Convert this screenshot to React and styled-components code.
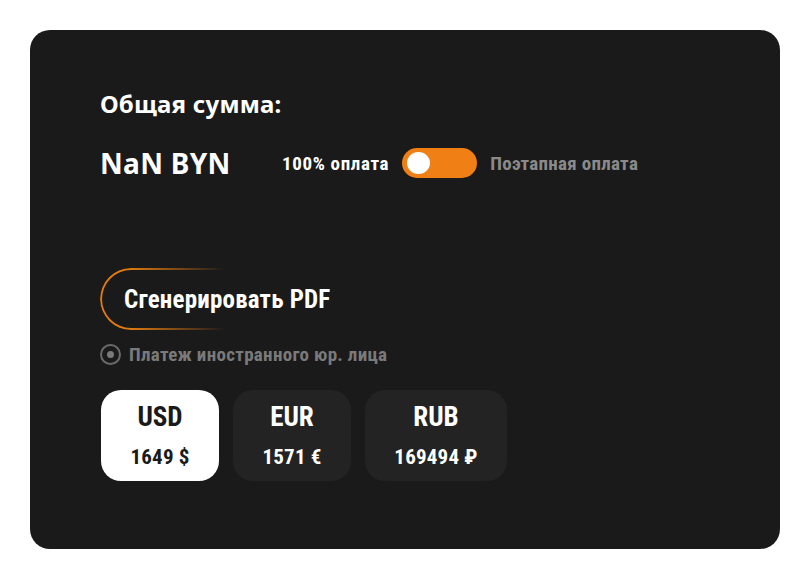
import React, { useState } from 'react';
import styled, { createGlobalStyle } from 'styled-components';

const GlobalStyle = createGlobalStyle`
    html, body {
        margin: 0;
        padding: 0;
        background: #ffffff;
    }
    * {
        box-sizing: border-box;
    }
`;

const narrow = `"Liberation Sans Narrow", "Roboto Condensed", "Liberation Sans", sans-serif`;

const currencies = [
    { code: 'USD', value: '1649 $', width: 118 },
    { code: 'EUR', value: '1571 €', width: 118 },
    { code: 'RUB', value: '169494 ₽', width: 142 },
];

function App() {
    const [stage, setStage] = useState(false);
    const [active, setActive] = useState('USD');

    return (
        <Page>
            <GlobalStyle />
            <Card>
                <Title>Общая сумма:</Title>
                <SumRow>
                    <Sum>NaN BYN</Sum>
                    <PayLabel $on={!stage}>100% оплата</PayLabel>
                    <Toggle $on={stage} onClick={() => setStage(!stage)}>
                        <Knob $on={stage} />
                    </Toggle>
                    <PayLabel $on={stage}>Поэтапная оплата</PayLabel>
                </SumRow>

                <PdfButton>Сгенерировать PDF</PdfButton>

                <RadioRow>
                    <Radio />
                    <RadioText>Платеж иностранного юр. лица</RadioText>
                </RadioRow>

                <CurrencyList>
                    {currencies.map((c) => (
                        <CurrencyCard
                            key={c.code}
                            $active={active === c.code}
                            $width={c.width}
                            onClick={() => setActive(c.code)}
                        >
                            <CurrencyCode>{c.code}</CurrencyCode>
                            <CurrencyValue>{c.value}</CurrencyValue>
                        </CurrencyCard>
                    ))}
                </CurrencyList>
            </Card>
        </Page>
    );
}

export default App;

const Page = styled.div`
    padding: 30px;
    width: 810px;
`;

const Card = styled.div`
    width: 750px;
    height: 519px;
    background: #1a1a1a;
    border-radius: 20px;
    padding: 59px 70px 0 70px;
    display: flex;
    flex-direction: column;
`;

const Title = styled.div`
    font-family: "Noto Sans", "Open Sans", sans-serif;
    font-weight: 700;
    font-size: 24px;
    line-height: 30px;
    letter-spacing: 0.2px;
    color: #ffffff;
`;

const SumRow = styled.div`
    display: flex;
    align-items: center;
    margin-top: 29px;
    height: 30px;
`;

const Sum = styled.div`
    font-family: "Noto Sans", "Open Sans", sans-serif;
    font-weight: 700;
    font-size: 28px;
    color: #ffffff;
    width: 182px;
    letter-spacing: 0.3px;
`;

const PayLabel = styled.span`
    font-family: ${narrow};
    font-weight: 700;
    font-size: 19px;
    letter-spacing: ${(p) => (p.$on ? '0.65px' : '0.3px')};
    color: ${(p) => (p.$on ? '#ffffff' : '#8a8a8a')};
`;

const Toggle = styled.div`
    width: 75px;
    height: 30px;
    border-radius: 15px;
    background: #f08015;
    margin: 0 13px;
    padding: 4px 5px;
    display: flex;
    justify-content: ${(p) => (p.$on ? 'flex-end' : 'flex-start')};
    cursor: pointer;
`;

const Knob = styled.div`
    width: 23px;
    height: 22px;
    border-radius: 50%;
    background: #ffffff;
`;

const PdfButton = styled.button`
    position: relative;
    align-self: flex-start;
    margin-top: 90px;
    height: 62px;
    padding: 0 24px;
    border: none;
    background: transparent;
    font-family: ${narrow};
    font-weight: 700;
    font-size: 25px;
    letter-spacing: 0.2px;
    color: #ffffff;
    cursor: pointer;

    &::before {
        content: '';
        position: absolute;
        inset: 0;
        border: 2px solid #e07a10;
        border-right: none;
        border-radius: 31px;
        -webkit-mask-image: linear-gradient(90deg, #000 0, #000 30px, transparent 125px);
        mask-image: linear-gradient(90deg, #000 0, #000 30px, transparent 125px);
    }
`;

const RadioRow = styled.div`
    display: flex;
    align-items: center;
    gap: 8px;
    margin-top: 13px;
`;

const Radio = styled.span`
    width: 21px;
    height: 21px;
    border-radius: 50%;
    border: 2px solid #6a6a6a;
    display: flex;
    align-items: center;
    justify-content: center;

    &::after {
        content: '';
        width: 7px;
        height: 7px;
        border-radius: 50%;
        background: #7a7a7a;
    }
`;

const RadioText = styled.span`
    font-family: ${narrow};
    font-weight: 700;
    font-size: 19px;
    letter-spacing: 0.3px;
    color: #7a7a7a;
`;

const CurrencyList = styled.div`
    display: flex;
    gap: 14px;
    margin-top: 24px;
    padding-left: 1px;
`;

const CurrencyCard = styled.div`
    width: ${(p) => p.$width}px;
    height: 91px;
    border-radius: 20px;
    background: ${(p) => (p.$active ? '#ffffff' : '#232323')};
    color: ${(p) => (p.$active ? '#1a1a1a' : '#ffffff')};
    display: flex;
    flex-direction: column;
    align-items: center;
    padding-top: 11px;
    cursor: pointer;
`;

const CurrencyCode = styled.div`
    font-family: ${narrow};
    font-weight: 700;
    font-size: 27px;
    line-height: 32px;
`;

const CurrencyValue = styled.div`
    font-family: ${narrow};
    font-weight: 700;
    font-size: 21px;
    line-height: 24px;
    letter-spacing: 0.2px;
    margin-top: 12px;
`;
